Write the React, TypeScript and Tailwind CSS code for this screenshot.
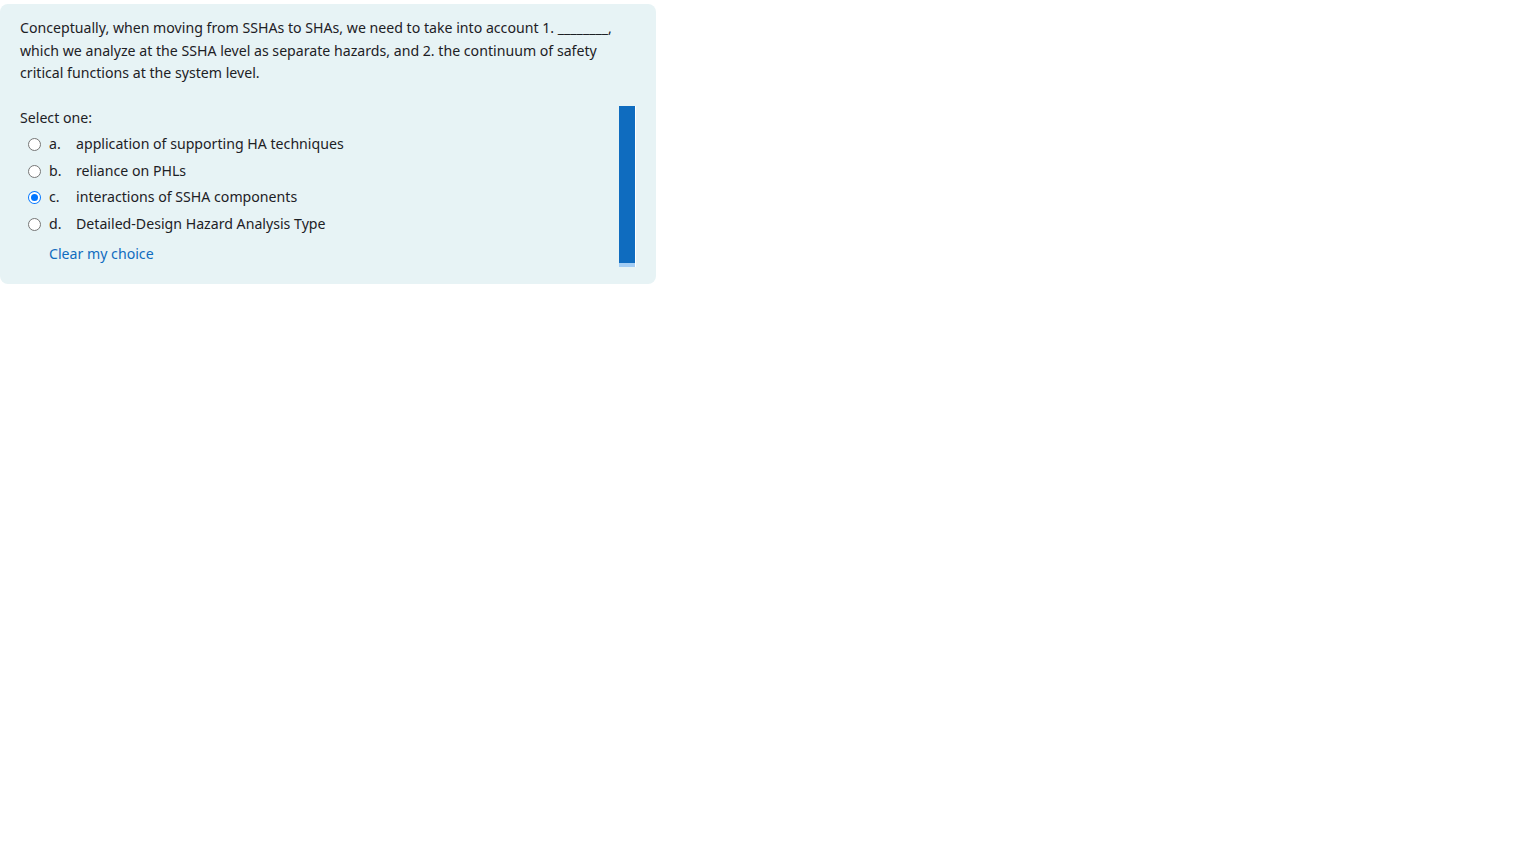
import React from "react";

const options = [
  { key: "a.", text: "application of supporting HA techniques", checked: false },
  { key: "b.", text: "reliance on PHLs", checked: false },
  { key: "c.", text: "interactions of SSHA components", checked: true },
  { key: "d.", text: "Detailed-Design Hazard Analysis Type", checked: false },
];

function Radio({ checked }: { checked: boolean }) {
  if (checked) {
    return (
      <span className="flex h-[13px] w-[13px] items-center justify-center rounded-full bg-[#0075ff]">
        <span className="flex h-[11px] w-[11px] items-center justify-center rounded-full bg-white">
          <span className="h-[7px] w-[7px] rounded-full bg-[#0075ff]" />
        </span>
      </span>
    );
  }
  return <span className="block h-[13px] w-[13px] rounded-full border border-[#767676] bg-white" />;
}

export default function App() {
  return (
    <div className="min-h-screen bg-white pt-1" style={{ fontFamily: '"Noto Sans", "Open Sans", sans-serif' }}>
      <div className="relative w-[656px] rounded-lg bg-[#e7f3f5] pb-[19px] pl-5 pr-4 pt-[13px] text-[14.15px] leading-[22.5px] text-[#1d2125]">
        <p className="whitespace-nowrap">
          Conceptually, when moving from SSHAs to SHAs, we need to take into account 1. ________,
          <br />
          which we analyze at the SSHA level as separate hazards, and 2. the continuum of safety
          <br />
          critical functions at the system level.
        </p>
        <p className="mt-[22px]">Select one:</p>
        <div className="mt-[2px] flex flex-col">
          {options.map((o) => (
            <div key={o.key} className="flex h-[26.7px] items-center">
              <span className="ml-[8px] mr-[8px]">
                <Radio checked={o.checked} />
              </span>
              <span className="w-[27px]">{o.key}</span>
              <span>{o.text}</span>
            </div>
          ))}
        </div>
        <div className="ml-[29px] mt-[5px] text-[#0f6cbf]">Clear my choice</div>
        <div className="absolute left-[619px] top-[102px] flex w-[17px] flex-col">
          <div className="flex">
            <div className="h-[157px] w-[16px] bg-[#0f6cbf]" />
            <div className="w-px bg-white" />
          </div>
          <div className="flex">
            <div className="h-[4px] w-[16px] bg-[#a3cdf4]" />
            <div className="w-px bg-white" />
          </div>
        </div>
      </div>
    </div>
  );
}
